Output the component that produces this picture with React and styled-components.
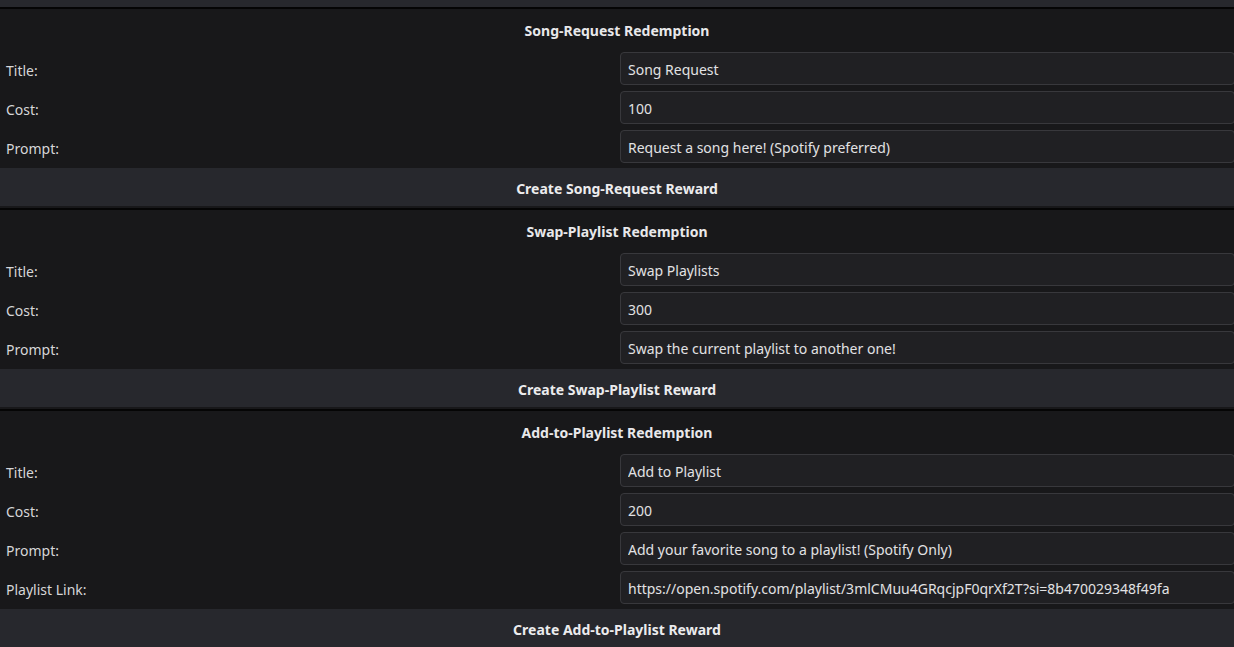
import styled, { createGlobalStyle } from "styled-components";

const GlobalStyle = createGlobalStyle`
  html, body {
    margin: 0;
    padding: 0;
    background: #18181a;
    overflow: hidden;
  }
  body {
    font-family: "Noto Sans", "Open Sans", sans-serif;
    font-size: 14px;
    color: #dedee0;
  }
`;

// tail of the reward button above the fold
const PrevTail = styled.div`
  height: 7px;
  background: #27282d;
`;

const Section = styled.section`
  border-top: 2px solid #050505;
  background: #18181a;
`;

const Heading = styled.h3`
  margin: 0;
  height: 43px;
  display: flex;
  align-items: center;
  justify-content: center;
  font-size: 14px;
  font-weight: 700;
  color: #e8e8ea;
`;

const Rows = styled.div`
  display: flex;
  flex-direction: column;
  gap: 6px;
`;

const Row = styled.label`
  display: grid;
  grid-template-columns: 620px 1fr;
  align-items: center;
`;

const Label = styled.span`
  padding-left: 6px;
  padding-top: 3px;
  color: #d6d6d8;
`;

const Input = styled.input`
  box-sizing: border-box;
  width: calc(100% + 1px);
  height: 33px;
  padding: 2px 7px 0;
  background: #202023;
  border: 1px solid #38383c;
  border-radius: 4px;
  color: #e2e2e4;
  font: inherit;
  outline: none;
`;

const RewardButton = styled.button`
  display: block;
  width: 100%;
  height: 38px;
  margin: 5px 0 2px;
  padding: 2px 0 0;
  border: none;
  background: #27282d;
  color: #ececee;
  font: inherit;
  font-weight: 700;
  cursor: pointer;
`;

const sections = [
  {
    name: "Song-Request",
    fields: [
      ["Title:", "Song Request"],
      ["Cost:", "100"],
      ["Prompt:", "Request a song here! (Spotify preferred)"],
    ],
  },
  {
    name: "Swap-Playlist",
    fields: [
      ["Title:", "Swap Playlists"],
      ["Cost:", "300"],
      ["Prompt:", "Swap the current playlist to another one!"],
    ],
  },
  {
    name: "Add-to-Playlist",
    fields: [
      ["Title:", "Add to Playlist"],
      ["Cost:", "200"],
      ["Prompt:", "Add your favorite song to a playlist! (Spotify Only)"],
      [
        "Playlist Link:",
        "https://open.spotify.com/playlist/3mlCMuu4GRqcjpF0qrXf2T?si=8b470029348f49fa",
      ],
    ],
  },
];

function RedemptionSection({ name, fields }) {
  return (
    <Section>
      <Heading>{name} Redemption</Heading>
      <Rows>
        {fields.map(([label, value]) => (
          <Row key={label}>
            <Label>{label}</Label>
            <Input defaultValue={value} />
          </Row>
        ))}
      </Rows>
      <RewardButton>Create {name} Reward</RewardButton>
    </Section>
  );
}

export default function App() {
  return (
    <>
      <GlobalStyle />
      <PrevTail />
      {sections.map((s) => (
        <RedemptionSection key={s.name} {...s} />
      ))}
    </>
  );
}
